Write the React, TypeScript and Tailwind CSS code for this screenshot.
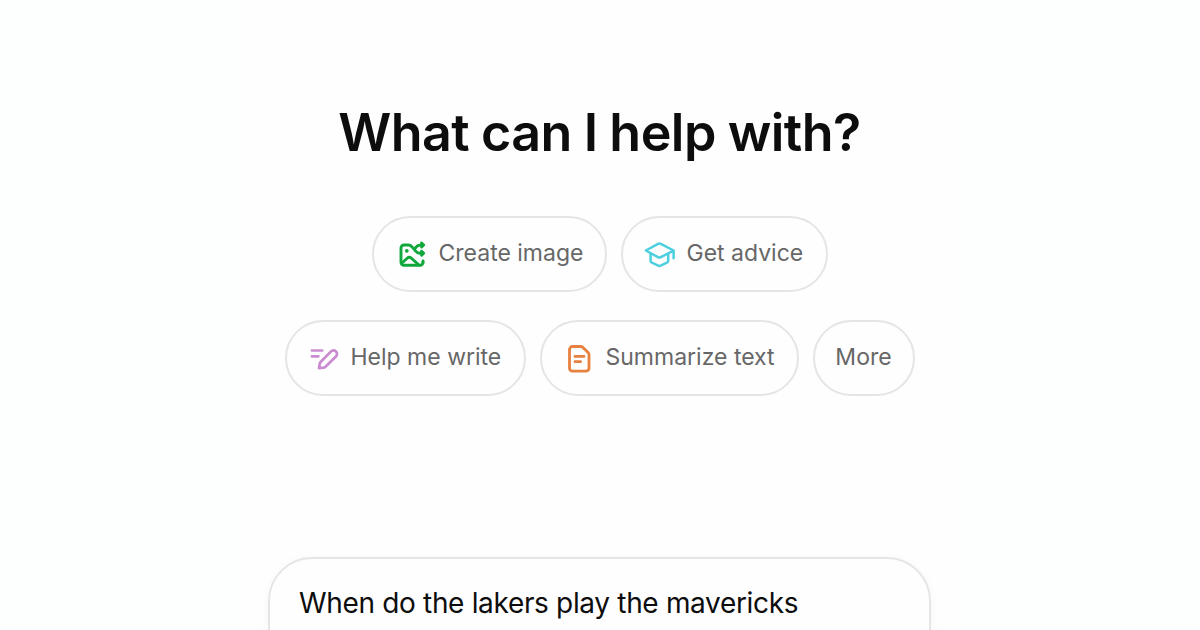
import type { ReactNode } from "react";

function CreateImageIcon() {
  return (
    <svg viewBox="0 0 36 36" className="size-9 shrink-0 text-[#10a83c]" fill="none" stroke="currentColor" strokeWidth="2.9" strokeLinecap="round" strokeLinejoin="round">
      <path d="M29 26.3a3 3 0 0 1-3 3H10a3 3 0 0 1-3-3V12a3 3 0 0 1 3-3h4.5c2 0 3 1 4 2.3l3.2 3.9c1.2 1.5 2.3 2.1 4 2.1H29" />
      <path d="M29 25v1.5M21 12.5c1.5-2.4 2.8-3.4 5-3.4h3" />
      <path d="M8 27l5.2-4.8c1.4-1.3 2.8-1.3 4.2 0L25 29" />
      <path d="M27.6 7l2 2-2 2zM27.6 15.2l2 2-2 2z" />
      <circle cx="12.8" cy="14.8" r="1.9" fill="currentColor" stroke="none" />
    </svg>
  );
}

function AdviceIcon() {
  return (
    <svg viewBox="0 0 36 36" className="size-9 shrink-0 text-[#4dcfe0]" fill="none" stroke="currentColor" strokeWidth="2.5" strokeLinecap="round" strokeLinejoin="round">
      <path d="M31.6 22.3v-7.8L18.8 7.8a3 3 0 0 0-2.8 0L3.9 14.5l12.1 6.7a3 3 0 0 0 2.8 0l12.8-6.7" />
      <path d="M8.6 17.8v7.3c0 .6.3 1 .8 1.3l6.8 3.2c.8.4 1.6.4 2.4 0l6.8-3.2c.5-.3.8-.7.8-1.3v-7.3" />
    </svg>
  );
}

function WriteIcon() {
  return (
    <svg viewBox="0 0 36 36" className="size-9 shrink-0 text-[#cb8bd0]" fill="none" stroke="currentColor" strokeWidth="2.7" strokeLinecap="round" strokeLinejoin="round">
      <path d="M5.9 10.5h10.3M5.9 16.3h6.5" />
      <path d="M13 28.2l.7-4.4c.1-.7.4-1.3.9-1.8l10.2-10.4c1.6-1.6 3.7-1.6 5.1-.2 1.5 1.4 1.5 3.6 0 5.1L19.5 26.8c-.5.5-1.1.8-1.8.9z" />
    </svg>
  );
}

function SummarizeIcon() {
  return (
    <svg viewBox="0 0 36 36" className="size-9 shrink-0 text-[#e8803f]" fill="none" stroke="currentColor" strokeWidth="2.8" strokeLinecap="round" strokeLinejoin="round">
      <path d="M11.5 6.5h8.3c.8 0 1.5.3 2.1.9l5.2 5.2c.6.6.9 1.3.9 2.1v13.5a3 3 0 0 1-3 3H11.5a3 3 0 0 1-3-3V9.5a3 3 0 0 1 3-3z" />
      <path d="M14 16.4h9M14 21.7h5.6" />
    </svg>
  );
}

type ChipProps = {
  label: string;
  className: string;
  icon?: ReactNode;
};

function Chip({ label, className, icon }: ChipProps) {
  return (
    <button
      className={`flex h-[76px] items-center rounded-full border-2 border-[#e5e5e5] text-[23px] whitespace-nowrap text-[#676767] ${className}`}
    >
      {icon}
      <span className="pb-px">{label}</span>
    </button>
  );
}

export default function App() {
  return (
    <main className="flex h-[630px] justify-center overflow-hidden bg-[#fdfefe] font-['Inter',sans-serif]">
      <div className="flex w-[712px] flex-col items-center bg-[#fefefe] pr-px">
        <h1 className="mt-[101px] h-16 text-[52px] leading-16 font-semibold tracking-[-0.55px] [word-spacing:-0.7px] whitespace-nowrap text-[#0d0d0d]">
          What can I help with?
        </h1>

        <div className="mt-[51px] flex gap-3.5">
          <Chip label="Create image" icon={<CreateImageIcon />} className="w-[235px] gap-[9px] pl-5" />
          <Chip label="Get advice" icon={<AdviceIcon />} className="w-[207px] gap-[9px] pl-[19px]" />
        </div>
        <div className="mt-7 flex gap-3.5">
          <Chip label="Help me write" icon={<WriteIcon />} className="w-[241px] gap-[9px] pl-[19px]" />
          <Chip label="Summarize text" icon={<SummarizeIcon />} className="w-[259px] gap-[9px] pl-[19px]" />
          <Chip label="More" className="w-[102px] justify-center" />
        </div>

        {/* Prompt box, runs past the bottom of the page */}
        <div className="mt-[161px] h-[140px] w-[663px] shrink-0 rounded-[44px] border-2 border-[#e5e5e5] px-[29px] pt-6 text-[28px] leading-10 tracking-[-0.33px] whitespace-nowrap text-[#0d0d0d] shadow-[0_2px_10px_rgba(0,0,0,0.04)]">
          When do the lakers play the mavericks
        </div>
      </div>
    </main>
  );
}
